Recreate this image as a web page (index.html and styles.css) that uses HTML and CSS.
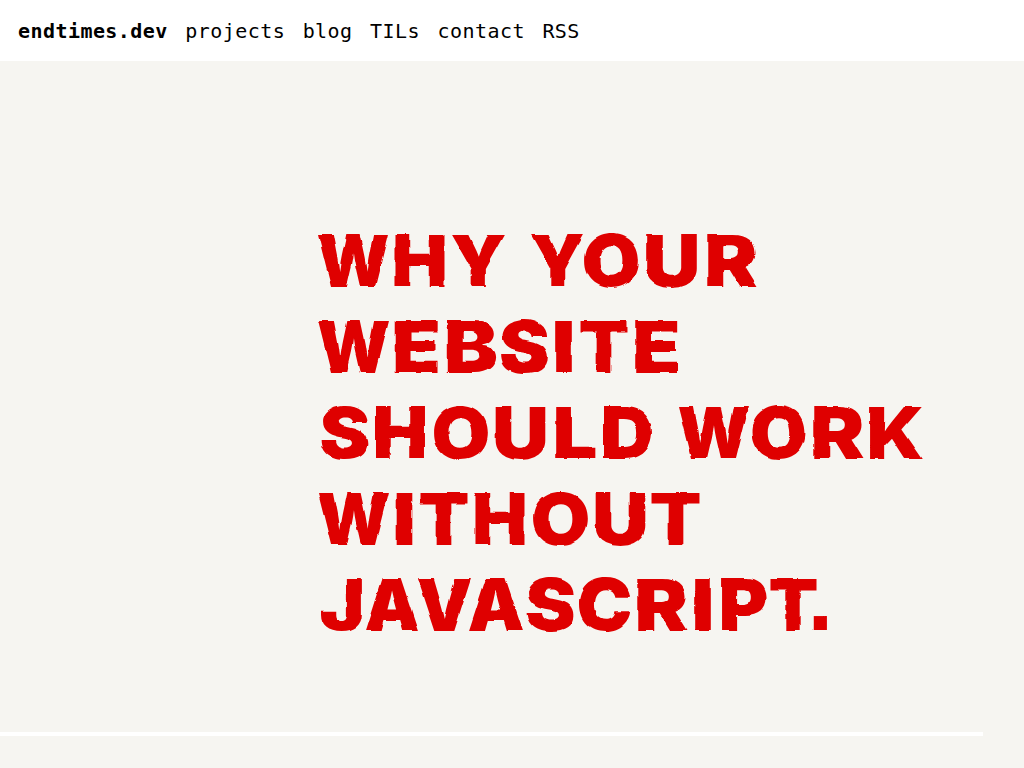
FILE: index.html
```
<!DOCTYPE html>
<html lang="en">
<head>
<meta charset="utf-8">
<title>Why your website should work without JavaScript</title>
<link rel="stylesheet" href="styles.css">
</head>
<body>
<nav class="nav">
<a class="nav-link home" href="#">endtimes.dev</a>
<a class="nav-link" href="#">projects</a>
<a class="nav-link" href="#">blog</a>
<a class="nav-link" href="#">TILs</a>
<a class="nav-link" href="#">contact</a>
<a class="nav-link" href="#">RSS</a>
</nav>
<main class="hero">
<h1 class="title">
<svg class="title-art" width="640" height="432" viewBox="0 0 640 432">
<defs>
<filter id="rough" x="-2%" y="-2%" width="104%" height="104%" color-interpolation-filters="sRGB">
<feTurbulence type="turbulence" baseFrequency="0.04" numOctaves="2" seed="2" result="noise"/>
<feDisplacementMap in="SourceGraphic" in2="noise" scale="2.4" xChannelSelector="R" yChannelSelector="G"/>
</filter>
</defs>
<g filter="url(#rough)" transform="translate(-0.5 0)">
<text y="68"><tspan x="-1" textLength="73" lengthAdjust="spacingAndGlyphs">W</tspan><tspan x="73.5" textLength="56" lengthAdjust="spacingAndGlyphs">H</tspan><tspan x="132" textLength="56" lengthAdjust="spacingAndGlyphs">Y</tspan></text>
<text y="68"><tspan x="212" textLength="55" lengthAdjust="spacingAndGlyphs">Y</tspan><tspan x="264" textLength="59" lengthAdjust="spacingAndGlyphs">O</tspan><tspan x="325" textLength="57" lengthAdjust="spacingAndGlyphs">U</tspan><tspan x="386" textLength="54" lengthAdjust="spacingAndGlyphs">R</tspan></text>
<text y="154"><tspan x="-1" textLength="73" lengthAdjust="spacingAndGlyphs">W</tspan><tspan x="73.5" textLength="49" lengthAdjust="spacingAndGlyphs">E</tspan><tspan x="125.5" textLength="54" lengthAdjust="spacingAndGlyphs">B</tspan><tspan x="180.5" textLength="51" lengthAdjust="spacingAndGlyphs">S</tspan><tspan x="234" textLength="23" lengthAdjust="spacingAndGlyphs">I</tspan><tspan x="260" textLength="51" lengthAdjust="spacingAndGlyphs">T</tspan><tspan x="314" textLength="49" lengthAdjust="spacingAndGlyphs">E</tspan></text>
<text y="240"><tspan x="1" textLength="51" lengthAdjust="spacingAndGlyphs">S</tspan><tspan x="54" textLength="56" lengthAdjust="spacingAndGlyphs">H</tspan><tspan x="113" textLength="59" lengthAdjust="spacingAndGlyphs">O</tspan><tspan x="173.5" textLength="57" lengthAdjust="spacingAndGlyphs">U</tspan><tspan x="234" textLength="45" lengthAdjust="spacingAndGlyphs">L</tspan><tspan x="282" textLength="54" lengthAdjust="spacingAndGlyphs">D</tspan></text>
<text y="240"><tspan x="359" textLength="73" lengthAdjust="spacingAndGlyphs">W</tspan><tspan x="431.5" textLength="58" lengthAdjust="spacingAndGlyphs">O</tspan><tspan x="492" textLength="54" lengthAdjust="spacingAndGlyphs">R</tspan><tspan x="548" textLength="58" lengthAdjust="spacingAndGlyphs">K</tspan></text>
<text y="326"><tspan x="-1" textLength="73" lengthAdjust="spacingAndGlyphs">W</tspan><tspan x="74.5" textLength="23" lengthAdjust="spacingAndGlyphs">I</tspan><tspan x="100" textLength="51" lengthAdjust="spacingAndGlyphs">T</tspan><tspan x="153.5" textLength="56" lengthAdjust="spacingAndGlyphs">H</tspan><tspan x="213" textLength="59" lengthAdjust="spacingAndGlyphs">O</tspan><tspan x="273.5" textLength="57" lengthAdjust="spacingAndGlyphs">U</tspan><tspan x="332" textLength="51" lengthAdjust="spacingAndGlyphs">T</tspan></text>
<text y="412"><tspan x="1" textLength="46" lengthAdjust="spacingAndGlyphs">J</tspan><tspan x="46" textLength="56" lengthAdjust="spacingAndGlyphs">A</tspan><tspan x="98" textLength="56" lengthAdjust="spacingAndGlyphs">V</tspan><tspan x="149" textLength="57" lengthAdjust="spacingAndGlyphs">A</tspan><tspan x="207" textLength="51" lengthAdjust="spacingAndGlyphs">S</tspan><tspan x="259" textLength="55" lengthAdjust="spacingAndGlyphs">C</tspan><tspan x="316" textLength="54" lengthAdjust="spacingAndGlyphs">R</tspan><tspan x="373" textLength="23" lengthAdjust="spacingAndGlyphs">I</tspan><tspan x="400" textLength="50" lengthAdjust="spacingAndGlyphs">P</tspan><tspan x="450" textLength="50" lengthAdjust="spacingAndGlyphs">T</tspan><tspan class="stop" x="488.5">.</tspan></text>
</g>
</svg>
</h1>
</main>
<hr class="rule">
</body>
</html>
```
FILE: styles.css
```
body {
  margin: 0;
  height: 768px;
  overflow: hidden;
  background: #f6f5f1;
  color: #000;
  font-family: "DejaVu Sans Mono", monospace;
}
.nav {
  display: flex;
  align-items: center;
  gap: 17.5px;
  height: 61px;
  padding: 0 18px;
  box-sizing: border-box;
  background: #fff;
  font-size: 20px;
  letter-spacing: 0.44px;
}
.nav-link {
  color: #000;
  text-decoration: none;
}
.home {
  font-weight: 700;
}
.hero {
  height: 671px;
  box-sizing: border-box;
  padding: 157px 0 0 318px;
}
.title {
  margin: 0;
}
.title-art {
  display: block;
  overflow: visible;
  fill: #df0000;
  font: 900 71.5px Inter, sans-serif;
}
.stop {
  font: 700 100px "Liberation Sans", sans-serif;
}
.rule {
  width: 983px;
  height: 4px;
  margin: 0;
  border: 0;
  background: #fff;
}
```
